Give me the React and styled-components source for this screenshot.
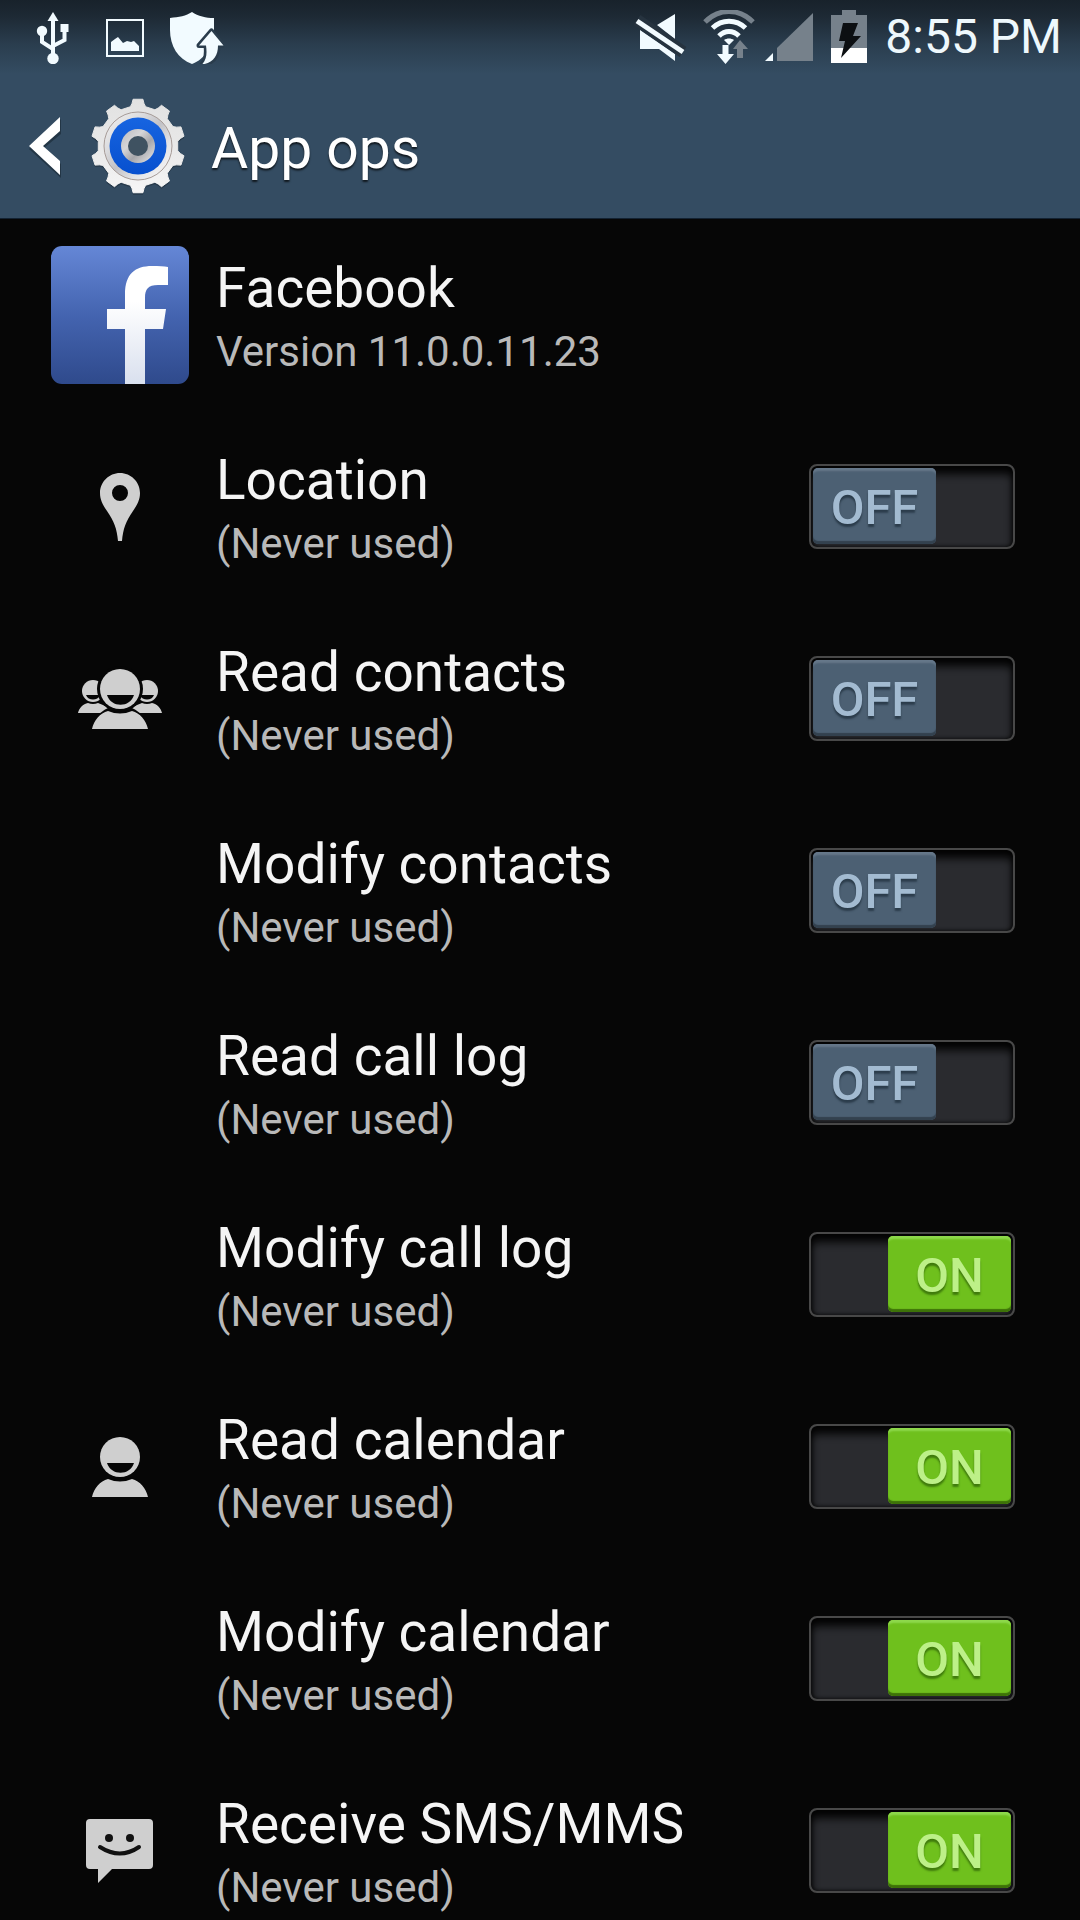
import React, { useState } from "react";
import styled, { createGlobalStyle } from "styled-components";

const GlobalStyle = createGlobalStyle`
  * { box-sizing: border-box; }
  body { margin: 0; background: #060606; font-family: Roboto, "Noto Sans", sans-serif; }
  h1, h2, p, ul { margin: 0; padding: 0; font-weight: 400; }
`;

const Screen = styled.div`
  display: flex;
  flex-direction: column;
  height: 100vh;
  overflow: hidden;
  background: #060606;
  color: #f5f5f5;
`;

const TopArea = styled.header`
  flex: none;
  background: linear-gradient(#18222b 0, #1d2934 16px, #2a3d4e 44px, #344c62 74px);
  border-bottom: 1px solid #132232;
`;

const StatusBar = styled.div`
  display: flex;
  align-items: center;
  justify-content: space-between;
  height: 74px;
  padding: 0 18px 0 26px;
`;

const StatusGroup = styled.div`
  display: flex;
  align-items: center;
  gap: ${(p) => p.$gap}px;
`;

const StatusIcon = styled.svg`
  display: block;
  width: ${(p) => p.$width || 54}px;
  height: 54px;
`;

const Clock = styled.time`
  padding-left: 3px;
  font-size: 48px;
  line-height: 56px;
  color: #eef8fc;
`;

const AppBar = styled.div`
  display: flex;
  align-items: center;
  height: 144px;
  padding-left: 28px;
`;

const BackButton = styled.button`
  display: flex;
  align-items: center;
  gap: 27px;
  padding: 0;
  border: 0;
  background: none;
  cursor: pointer;
`;

const ScreenTitle = styled.h1`
  padding: 6px 0 0 23px;
  font-size: 57px;
  line-height: 64px;
  color: #fff;
  text-shadow: 0 2px 2px rgba(0, 0, 0, 0.7);
`;

const Content = styled.main`
  flex: 1;
  min-height: 0;
  overflow-y: auto;
  scrollbar-width: none;
`;

const List = styled.ul`
  list-style: none;
`;

const Row = styled.div`
  display: grid;
  grid-template-columns: 138px 1fr auto;
  align-items: center;
  column-gap: 27px;
  height: 192px;
  padding: 0 65px 0 51px;
`;

const IconCell = styled.div`
  display: flex;
  justify-content: center;
`;

const Label = styled.div`
  padding-top: 2px;
`;

const AppLogo = styled.svg`
  display: block;
  width: 138px;
  height: 138px;
  border-radius: 11px;
`;

const OpIcon = styled.svg`
  display: block;
  width: 96px;
  height: 96px;
  fill: #cfcfcf;
`;

const Name = styled.h2`
  font-size: 55px;
  line-height: 72px;
  white-space: nowrap;
`;

const Detail = styled.p`
  font-size: 42px;
  line-height: 56px;
  white-space: nowrap;
  color: #b9b9b9;
`;

const Track = styled.button`
  display: flex;
  justify-content: ${(p) => (p.$on ? "flex-end" : "flex-start")};
  width: 206px;
  height: 85px;
  margin-bottom: 2px;
  padding: 2px;
  border: 2px solid #484848;
  border-radius: 8px;
  background: #2a2b2f;
  box-shadow: inset 0 8px 8px #030303, inset 0 0 4px #030303;
  font-family: inherit;
  cursor: pointer;
`;

const Thumb = styled.span`
  width: 123px;
  height: 76px;
  border-radius: 5px;
  font-size: 49px;
  line-height: 80px;
  font-weight: 500;
  text-align: center;
  color: ${(p) => (p.$on ? "#bdf088" : "#a3bbd1")};
  background: ${(p) => (p.$on ? "#6fc01d" : "#4c6073")};
  text-shadow: 0 3px 2px ${(p) => (p.$on ? "#3f7a0c" : "#2b3c4b")};
  box-shadow: inset 0 4px 2px -1px ${(p) => (p.$on ? "#8ed84c" : "#66788a")},
    inset 0 -3px 1px ${(p) => (p.$on ? "#3d7208" : "#33414e")};
`;

function gearPath(cx, cy, teeth, outer, inner) {
  const points = [];
  const step = 360 / teeth;
  for (let i = 0; i < teeth; i += 1) {
    [[-11, inner], [-8, outer - 4], [-6, outer], [6, outer], [8, outer - 4], [11, inner]].forEach(([a, r]) => {
      const t = ((i * step + a) * Math.PI) / 180;
      points.push(`${(cx + r * Math.sin(t)).toFixed(2)} ${(cy - r * Math.cos(t)).toFixed(2)}`);
    });
  }
  return `M${points.join("L")}Z`;
}

const GEAR = gearPath(50, 50, 10, 47, 40);

function BackArrow() {
  return (
    <svg width="33" height="64" viewBox="0 0 33 64" aria-hidden="true">
      <path d="M33 5V20L16 34L33 50V64L1 35Z" fill="#1d2d3b" opacity=".7" />
      <path d="M32 3V17L15 32L32 47V61L1 32Z" fill="#fff" />
    </svg>
  );
}

function SettingsGear() {
  return (
    <svg width="100" height="100" viewBox="0 0 100 100" aria-hidden="true">
      <defs>
        <linearGradient id="metal" x1="0" y1="0" x2="0" y2="1">
          <stop offset="0" stopColor="#e2e2e2" />
          <stop offset=".5" stopColor="#e8e8e8" />
          <stop offset="1" stopColor="#f6f6f6" />
        </linearGradient>
        <linearGradient id="rim" x1="0" y1="0" x2="1" y2="1">
          <stop offset="0" stopColor="#f4f4f4" />
          <stop offset=".3" stopColor="#dcdcde" />
          <stop offset=".5" stopColor="#c2c2c6" />
          <stop offset=".7" stopColor="#e4e4e6" />
          <stop offset="1" stopColor="#fafafa" />
        </linearGradient>
        <linearGradient id="hub" x1="0" y1="0" x2="1" y2="1">
          <stop offset="0" stopColor="#b9b9bd" />
          <stop offset=".35" stopColor="#d6d6d8" />
          <stop offset=".6" stopColor="#a6a6aa" />
          <stop offset="1" stopColor="#ececec" />
        </linearGradient>
        <linearGradient id="blue" x1="0" y1="0" x2="0" y2="1">
          <stop offset="0" stopColor="#1764e0" />
          <stop offset="1" stopColor="#0750cf" />
        </linearGradient>
      </defs>
      <path d={GEAR} transform="translate(0 2)" fill="#1b2936" opacity=".5" />
      <path d={GEAR} fill="url(#metal)" stroke="url(#metal)" strokeWidth="1" strokeLinejoin="round" />
      <circle cx="50" cy="50" r="34" fill="url(#rim)" stroke="#a79c98" strokeWidth="1" />
      <circle cx="50" cy="50" r="28.5" fill="url(#blue)" />
      <circle cx="50" cy="50" r="17" fill="url(#hub)" />
      <circle cx="50" cy="50" r="10" fill="#3f5261" />
    </svg>
  );
}

function UsbIcon() {
  return (
    <StatusIcon viewBox="0 0 54 54" role="img" aria-label="USB connected">
      <g fill="#f2fbff">
        <path d="M27 2L32.500 11H21.500Z" />
        <circle cx="16" cy="21" r="5.200" />
        <rect x="34.500" y="14" width="8" height="8" />
        <circle cx="27" cy="48.500" r="5.700" />
      </g>
      <path d="M27 9V46M16 23V32L27 39M38.500 20V30L27 36" fill="none" stroke="#f2fbff" strokeWidth="4" />
    </StatusIcon>
  );
}

function PictureIcon() {
  return (
    <StatusIcon viewBox="0 0 54 54" role="img" aria-label="Screenshot saved">
      <rect x="9" y="10" width="36" height="36" fill="none" stroke="#f2fbff" strokeWidth="2" />
      <path d="M13 41V32L17 29L20 27L25 33L29 31L33 32L36 31L41 36V41Z" fill="#f2fbff" />
    </StatusIcon>
  );
}

function ShieldIcon() {
  return (
    <StatusIcon viewBox="0 0 54 54" role="img" aria-label="Security update">
      <path d="M22 2C28 6 36 8 44 8V20C44 36 35 49 22 54C8 49 0 36 0 20V8C9 7 16 6 22 2Z" fill="#f2fbff" />
      <path d="M41.500 21L53.500 35.500H48C48 46 43 53 32 54.500C37 49 37 43 36 35.500H29Z" fill="none" stroke="#2a3c4c" strokeWidth="5" strokeLinejoin="round" />
      <path d="M41.500 21L53.500 35.500H48C48 46 43 53 32 54.500C37 49 37 43 36 35.500H29Z" fill="#f2fbff" />
    </StatusIcon>
  );
}

function MuteIcon() {
  return (
    <StatusIcon $width={72} viewBox="0 0 72 54" role="img" aria-label="Sound off">
      <path d="M33 15L51 4V29ZM16 20L51 44V51L35 39H16Z" fill="#f2fbff" />
      <path d="M13 10L59 42" stroke="#26333f" strokeWidth="12" />
      <path d="M13 11L59 42" stroke="#f2fbff" strokeWidth="5" />
    </StatusIcon>
  );
}

function WifiIcon() {
  return (
    <StatusIcon viewBox="0 0 54 54" role="img" aria-label="Wi-Fi">
      <path d="M3 12C17 -2 37 -2 51 12" fill="none" stroke="#76818b" strokeWidth="5" />
      <g fill="none" stroke="#f2fbff" strokeWidth="5">
        <path d="M10.500 18C20 9 34 9 43.500 18" />
        <path d="M17 26C23 20 31 20 37 26" />
      </g>
      <path d="M27 35L22 30C25 28 29 28 32 30Z" fill="#f2fbff" />
      <path d="M20.500 35H26.500V44H32L23.500 54L15 44H20.500Z" fill="#f2fbff" />
      <path d="M38 30L46 39H41V48H35V39H31Z" fill="#76818b" />
    </StatusIcon>
  );
}

function SignalIcon() {
  return (
    <StatusIcon viewBox="0 0 54 54" role="img" aria-label="Weak mobile signal">
      <path d="M51 3V51H15V38Z" fill="#76818b" />
      <path d="M3 51L11 43V51Z" fill="#f2fbff" />
    </StatusIcon>
  );
}

function BatteryIcon() {
  return (
    <StatusIcon viewBox="0 0 54 54" role="img" aria-label="Battery charging">
      <path d="M20 0H34V5H45V39H9V5H20Z" fill="#76818b" />
      <rect x="9" y="38" width="36" height="15" fill="#fff" />
      <path d="M21 13H36L31 26H39L19 48L23 31H17Z" fill="#0c0f12" />
    </StatusIcon>
  );
}

function FacebookLogo() {
  return (
    <AppLogo viewBox="0 0 138 138" role="img" aria-label="Facebook logo">
      <defs>
        <linearGradient id="fbBlue" x1="0" y1="0" x2="0" y2="1">
          <stop offset="0" stopColor="#6587d6" />
          <stop offset=".5" stopColor="#4464b0" />
          <stop offset="1" stopColor="#2f4a8c" />
        </linearGradient>
        <linearGradient id="fbWhite" x1="0" y1="0" x2="0" y2="1">
          <stop offset=".3" stopColor="#fff" />
          <stop offset="1" stopColor="#d9e0ee" />
        </linearGradient>
      </defs>
      <rect width="138" height="138" fill="url(#fbBlue)" />
      <path
        d="M74 138V83H56V63H74V48C74 28 84 20 101 20C108 20 113 20 117 21V39H107C97 39 94 43 94 52V63H115L112 83H94V138Z"
        fill="url(#fbWhite)"
      />
    </AppLogo>
  );
}

const opIcons = {
  location: (
    <OpIcon viewBox="0 0 96 96" aria-hidden="true">
      <path
        fillRule="evenodd"
        d="M48 14C59 14 68 23 68 34C68 41 65 46 61 52C54 62 51 70 50 82H46C45 70 42 62 35 52C31 46 28 41 28 34C28 23 37 14 48 14ZM48 26A8 8 0 1 0 48 42A8 8 0 1 0 48 26Z"
      />
    </OpIcon>
  ),
  contacts: (
    <OpIcon viewBox="0 0 96 96" aria-hidden="true">
      <circle cx="21" cy="40" r="11" />
      <circle cx="75" cy="40" r="11" />
      <path d="M14 44H28C26 50 16 50 14 44ZM68 44H82C80 50 70 50 68 44Z" fill="#060606" />
      <path d="M6 62C7 57 11 53 16 52Q21 54 26 52L36 56V62ZM90 62C89 57 85 53 80 52Q75 54 70 52L60 56V62Z" />
      <path d="M17 80C21 67 28 61 36 57H60C68 61 75 67 79 80Z" fill="#060606" />
      <circle cx="48" cy="38" r="23" fill="#060606" />
      <path d="M20 78C22 69 28 62 36 60Q48 65 60 60C68 62 74 69 76 78Z" />
      <circle cx="48" cy="38" r="20" />
      <path d="M35 44H62C58 57 39 57 35 44Z" fill="#060606" />
    </OpIcon>
  ),
  calendar: (
    <OpIcon viewBox="0 0 96 96" aria-hidden="true">
      <path d="M20 78C22 69 28 62 36 60Q48 65 60 60C68 62 74 69 76 78Z" />
      <circle cx="48" cy="38" r="20" />
      <path d="M35 44H62C58 57 39 57 35 44Z" fill="#060606" />
    </OpIcon>
  ),
  message: (
    <OpIcon viewBox="0 0 96 96" aria-hidden="true">
      <path d="M18 16H77Q81 16 81 20V62Q81 66 77 66H40L26 80V66H18Q14 66 14 62V20Q14 16 18 16Z" />
      <ellipse cx="37" cy="35" rx="4" ry="4" fill="#111" />
      <ellipse cx="58" cy="35" rx="4" ry="4" fill="#111" />
      <path d="M28 44Q48 57 67 44" fill="none" stroke="#111" strokeWidth="4" strokeLinecap="round" />
    </OpIcon>
  ),
};

const operations = [
  { id: "location", name: "Location", icon: "location", on: false },
  { id: "read-contacts", name: "Read contacts", icon: "contacts", on: false },
  { id: "modify-contacts", name: "Modify contacts", on: false },
  { id: "read-call-log", name: "Read call log", on: false },
  { id: "modify-call-log", name: "Modify call log", on: true },
  { id: "read-calendar", name: "Read calendar", icon: "calendar", on: true },
  { id: "modify-calendar", name: "Modify calendar", on: true },
  { id: "receive-sms", name: "Receive SMS/MMS", icon: "message", on: true },
];

function Operation({ id, name, icon, on: initial }) {
  const [on, setOn] = useState(initial);
  return (
    <Row as="li">
      <IconCell>{icon && opIcons[icon]}</IconCell>
      <Label>
        <Name id={id}>{name}</Name>
        <Detail>(Never used)</Detail>
      </Label>
      <Track type="button" role="switch" aria-checked={on} aria-labelledby={id} $on={on} onClick={() => setOn(!on)}>
        <Thumb $on={on}>{on ? "ON" : "OFF"}</Thumb>
      </Track>
    </Row>
  );
}

export default function App() {
  return (
    <Screen>
      <GlobalStyle />
      <TopArea>
        <StatusBar>
          <StatusGroup $gap={18}>
            <UsbIcon />
            <PictureIcon />
            <ShieldIcon />
          </StatusGroup>
          <StatusGroup $gap={6}>
            <MuteIcon />
            <WifiIcon />
            <SignalIcon />
            <BatteryIcon />
            <Clock>8:55 PM</Clock>
          </StatusGroup>
        </StatusBar>
        <AppBar>
          <BackButton type="button" aria-label="Navigate up">
            <BackArrow />
            <SettingsGear />
          </BackButton>
          <ScreenTitle>App ops</ScreenTitle>
        </AppBar>
      </TopArea>
      <Content>
        <Row>
          <FacebookLogo />
          <Label>
            <Name>Facebook</Name>
            <Detail>Version 11.0.0.11.23</Detail>
          </Label>
        </Row>
        <List>
          {operations.map((op) => (
            <Operation key={op.id} {...op} />
          ))}
        </List>
      </Content>
    </Screen>
  );
}
